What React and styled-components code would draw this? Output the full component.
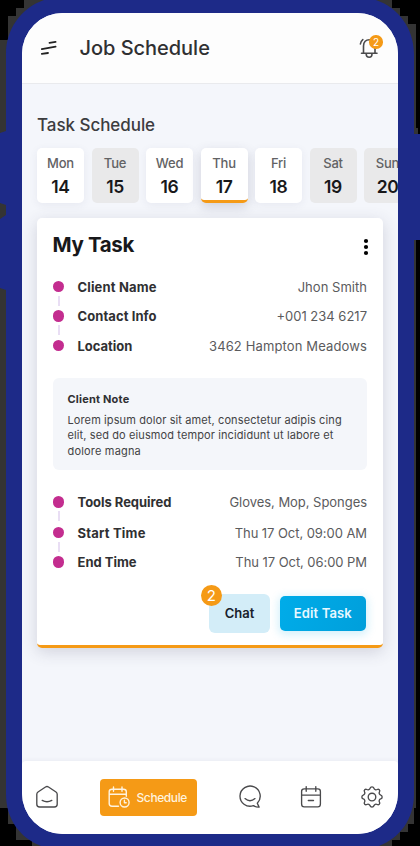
import React from "react";
import styled, { createGlobalStyle, css } from "styled-components";

const colors = {
  frame: "#1d2a88",
  ink: "#303032",
  muted: "#5b5b5d",
  orange: "#f59a16",
  pink: "#c32d8f",
  surface: "#f4f6fb",
};

const GlobalStyle = createGlobalStyle`
  *, *::before, *::after { box-sizing: border-box; }
  body { margin: 0; background: #000; font-family: Inter, "Liberation Sans", sans-serif; }
  button { font: inherit; border: 0; padding: 0; background: none; color: inherit; }
  h1, h2, h3, p { margin: 0; }
`;

const tracked = css`
  letter-spacing: ${(p) => p.$track || 0}px;
  white-space: nowrap;
`;

const Stage = styled.div`
  display: grid;
  width: 420px;
  height: 846px;
  overflow: hidden;
  background: #000;
  & > * { grid-area: 1 / 1; }
`;

const Casing = styled.svg`
  display: block;
`;

const Screen = styled.main`
  display: flex;
  flex-direction: column;
  width: 376px;
  height: 821px;
  margin: 12.5px 0 0 22px;
  border-radius: 41px;
  overflow: hidden;
  background: ${colors.surface};
`;

const Header = styled.header`
  display: flex;
  align-items: center;
  flex: none;
  height: 71.5px;
  padding: 0 17px 0 18px;
  background: #fdfdfd;
  border-bottom: 1.5px solid #e9eaed;
`;

const PageTitle = styled.h1`
  flex: 1;
  margin-left: 21.5px;
  font-size: 20px;
  line-height: 26px;
  font-weight: 450;
  color: ${colors.ink};
  ${tracked}
`;

const BellButton = styled.button`
  position: relative;
  display: flex;
  width: 24px;
  height: 26px;
`;

const CountBadge = styled.span`
  position: absolute;
  top: ${(p) => p.$top}px;
  left: ${(p) => p.$left}px;
  display: flex;
  align-items: center;
  justify-content: center;
  width: ${(p) => p.$size}px;
  height: ${(p) => p.$size}px;
  border-radius: 50%;
  background: ${colors.orange};
  color: #fff;
  font-size: ${(p) => p.$font}px;
  line-height: 1;
  font-weight: 400;
`;

const Content = styled.div`
  flex: 1;
  min-height: 0;
  padding: 30px 15px 0;
`;

const SectionTitle = styled.h2`
  height: 22px;
  margin-bottom: 12px;
  font-size: 17px;
  line-height: 22px;
  font-weight: 450;
  color: #3c3c3f;
  ${tracked}
`;

const Days = styled.div`
  display: flex;
  gap: 7.5px;
  margin-bottom: 15px;
`;

const Day = styled.button`
  display: flex;
  flex: none;
  flex-direction: column;
  align-items: center;
  width: 47px;
  height: 54.5px;
  padding-top: 6px;
  border-radius: 5px;
  background: ${(p) => (p.$off ? "#e9e9ea" : "#fff")};
  border-bottom: ${(p) => (p.$active ? `3px solid ${colors.orange}` : "0")};
  box-shadow: ${(p) =>
    p.$active
      ? "0 4px 12px rgba(60, 60, 90, 0.2)"
      : p.$off
        ? "none"
        : "0 2px 8px rgba(60, 60, 100, 0.07)"};
`;

const DayName = styled.span`
  font-size: 13px;
  line-height: 18px;
  font-weight: 500;
  letter-spacing: -0.2px;
  color: #626264;
`;

const DayNumber = styled.span`
  margin-top: 3px;
  font-size: 17.5px;
  line-height: 23px;
  font-weight: 600;
  letter-spacing: -0.4px;
  color: #18181a;
`;

const Card = styled.section`
  height: 430px;
  padding: 13px 16px 0 15.5px;
  border-radius: 5px;
  border-bottom: 3px solid ${colors.orange};
  background: #fff;
  box-shadow: 0 4px 16px rgba(60, 60, 90, 0.19);
`;

const CardHead = styled.div`
  display: flex;
  align-items: center;
  justify-content: space-between;
  height: 28px;
  margin-bottom: 13.5px;
`;

const CardTitle = styled.h2`
  font-size: 20.5px;
  line-height: 28px;
  font-weight: 700;
  color: #18181a;
  ${tracked}
`;

const MoreButton = styled.button`
  display: flex;
  margin: 4px -1.5px 0 0;
`;

const Facts = styled.div`
  display: flex;
  flex-direction: column;
`;

const Fact = styled.div`
  display: grid;
  grid-template-columns: 25px 1fr auto;
  align-items: center;
  height: ${(p) => p.$height}px;
  font-size: 13px;
`;

const Marker = styled.span`
  position: relative;
  width: 11.5px;
  height: 11.5px;
  border-radius: 50%;
  background: ${colors.pink};
  ${(p) =>
    p.$linked &&
    css`
      &::after {
        content: "";
        position: absolute;
        top: 15px;
        left: 5px;
        width: 2px;
        height: 10px;
        background: #e9def4;
      }
    `}
`;

const FactLabel = styled.span`
  font-weight: 650;
  color: ${colors.ink};
  ${tracked}
`;

const FactValue = styled.span`
  font-weight: 400;
  color: ${colors.muted};
  ${tracked}
`;

const Note = styled.div`
  height: 92px;
  margin: 17.5px 0 16.5px;
  padding: 13px 15px 0;
  border-radius: 6px;
  background: #f4f6fa;
`;

const NoteTitle = styled.h3`
  margin-bottom: 5.5px;
  font-size: 11px;
  line-height: 16px;
  font-weight: 650;
  color: ${colors.ink};
  ${tracked}
`;

const NoteLine = styled.p`
  font-size: 11px;
  line-height: 15.5px;
  color: #434345;
  ${tracked}
`;

const Actions = styled.div`
  display: flex;
  align-items: center;
  justify-content: flex-end;
  gap: 10px;
  margin-top: 17px;
`;

const Action = styled.button`
  position: relative;
  font-size: 13px;
  font-weight: 600;
  ${tracked}
`;

const ChatAction = styled(Action)`
  width: 61px;
  height: 39px;
  border-radius: 6px;
  background: #d3edf8;
  color: #18212b;
`;

const EditAction = styled(Action)`
  width: 85.5px;
  height: 35px;
  margin-right: 1.5px;
  border-radius: 5px;
  background: linear-gradient(110deg, #00ace9, #009fdb);
  color: #e8f8ff;
  box-shadow: 0 2px 8px 2px rgba(0, 172, 230, 0.17);
`;

const Nav = styled.nav`
  display: flex;
  align-items: center;
  flex: none;
  height: 72.5px;
  padding: 0 14px 0 13px;
  border-radius: 4px 4px 0 0;
  background: #fff;
  box-shadow: 0 -1px 4px rgba(60, 60, 90, 0.05);
`;

const NavItem = styled.button`
  display: flex;
  flex: none;
  margin-left: ${(p) => p.$gap}px;
`;

const ActiveNavItem = styled(NavItem)`
  align-items: center;
  width: 97px;
  height: 37px;
  padding-left: 8px;
  gap: 7px;
  border-radius: 4px;
  background: ${colors.orange};
  color: #fff3df;
  font-size: 12px;
  font-weight: 500;
  letter-spacing: -0.4px;
`;

const Icon = styled.svg`
  display: block;
  flex: none;
  fill: none;
  stroke: ${(p) => p.$stroke || "#4a4a4c"};
  stroke-width: ${(p) => p.$weight || 1.35};
  stroke-linecap: round;
  stroke-linejoin: round;
`;

function PhoneCasing() {
  return (
    <Casing width="420" height="846" viewBox="0 0 420 846" aria-hidden="true">
      <path
        fill="#343434"
        d="M24 0H392V8H400V16H408V24H416V128H418V134H420V236H416V808H414V824H408V832H400V840H392V846H32V840H16V824H8V808H0V40H8V16H16V8H24Z"
      />
      <path
        fill={colors.frame}
        d="M44 0H376C399 8 414 29 414 54V134H420V240H414V794C414 819 400 838 379 846H41C20 838 6 819 6 794V290L0 288V219L6 215V205L0 203V133L6 131V54C6 29 21 8 44 0Z"
      />
    </Casing>
  );
}

const MenuIcon = () => (
  <Icon width="18" height="16" viewBox="0 0 18 16" $stroke="#222" $weight="1.8">
    <path d="M9.5 2.8 15.6 1.9M1.8 9.1 15.6 6.6M1.8 13.9 8 13" />
  </Icon>
);

const BellIcon = () => (
  <Icon width="24" height="26" viewBox="0 0 24 26" $weight="1.6">
    <path d="M4.5 18.2H20M6.5 17.9V10.9C6.5 6.9 9 4.7 12.3 4.7S18 7.2 18 10.9V17.9M9.2 18.9C9.2 20.9 10.5 22.2 12.2 22.2S15 20.9 15 18.9M3.4 9C3.6 7.2 4.4 5.7 5.8 4.6" />
  </Icon>
);

const MoreIcon = () => (
  <Icon width="6" height="18" viewBox="0 0 6 18" $stroke="none">
    <g fill="#000">
      <circle cx="3" cy="3" r="2.1" />
      <circle cx="3" cy="9" r="2.1" />
      <circle cx="3" cy="15" r="2.1" />
    </g>
  </Icon>
);

const HomeIcon = () => (
  <Icon width="24" height="24" viewBox="0 0 24 24">
    <path d="M1.8 9.2Q1.8 7.8 3 7L10.5 2Q12 1.1 13.5 2L21 7Q22.2 7.8 22.2 9.2V19.2Q22.2 22 19.4 22H4.6Q1.8 22 1.8 19.2ZM7.2 15.4Q12 18 16.8 15.4" />
  </Icon>
);

const ScheduleIcon = () => (
  <Icon width="22" height="22" viewBox="0 0 22 22" $stroke="#fff3df" $weight="1.4">
    <path d="M10.5 20.3H4Q1.2 20.3 1.2 17.5V5.8Q1.2 3.2 4 3.2H15.5Q18.3 3.2 18.3 5.8V10.2M1.2 8.3H18.3M5.5 1V5.3M14 1V5.3" />
    <circle cx="16.6" cy="16.5" r="4.5" />
    <path d="M16.4 14.3V16.8H18.2" />
  </Icon>
);

const ChatIcon = () => (
  <Icon width="24" height="24" viewBox="0 0 24 24">
    <path d="M15.3 20.7A10.1 10.1 0 1 1 19.3 18.2L21.1 22.1Q18.6 22.5 15.3 20.7ZM7 13.6Q12 17.9 17 13.6" />
  </Icon>
);

const CalendarIcon = () => (
  <Icon width="22" height="24" viewBox="0 0 22 24">
    <path d="M1.6 6.5Q1.6 3.9 4.2 3.9H17.8Q20.4 3.9 20.4 6.5V19Q20.4 21.9 17.8 21.9H4.2Q1.6 21.9 1.6 19ZM1.6 10.1H20.4M6.2 1.6V6.3M15.8 1.6V6.3M8.3 15.5H13.5" />
  </Icon>
);

const GearIcon = () => (
  <Icon width="24" height="24" viewBox="0 0 24 24">
    <circle cx="12" cy="12" r="3.8" />
    <path d="M10.1 3.2C10.6 1.5 13.4 1.5 13.9 3.2C14.3 4.7 15.9 5.3 17.2 4.5C18.8 3.7 20.4 5.3 19.5 6.8C18.7 8.1 19.3 9.7 20.8 10.1C22.6 10.6 22.6 13.4 20.8 13.9C19.3 14.3 18.7 15.9 19.5 17.2C20.4 18.7 18.8 20.3 17.2 19.5C15.9 18.7 14.3 19.3 13.9 20.8C13.4 22.5 10.6 22.5 10.1 20.8C9.7 19.3 8.1 18.7 6.8 19.5C5.2 20.3 3.6 18.7 4.5 17.2C5.3 15.9 4.7 14.3 3.2 13.9C1.4 13.4 1.4 10.6 3.2 10.1C4.7 9.7 5.3 8.1 4.5 6.8C3.6 5.3 5.2 3.7 6.8 4.5C8.1 5.3 9.7 4.7 10.1 3.2Z" />
  </Icon>
);

const days = [
  { name: "Mon", date: 14 },
  { name: "Tue", date: 15, off: true },
  { name: "Wed", date: 16 },
  { name: "Thu", date: 17, active: true },
  { name: "Fri", date: 18 },
  { name: "Sat", date: 19, off: true },
  { name: "Sun", date: 20, off: true },
];

const clientFacts = [
  { label: "Client Name", labelTrack: 0.15, value: "Jhon Smith", track: 0.03, height: 29 },
  { label: "Contact Info", labelTrack: 0.08, value: "+001 234 6217", track: 0, height: 29.5 },
  { label: "Location", labelTrack: -0.02, value: "3462 Hampton Meadows", track: 0.13, height: 30 },
];

const jobFacts = [
  { label: "Tools Required", labelTrack: -0.03, value: "Gloves, Mop, Sponges", track: -0.04, height: 31 },
  { label: "Start Time", labelTrack: 0.2, value: "Thu 17 Oct, 09:00 AM", track: -0.06, height: 30 },
  { label: "End Time", labelTrack: 0, value: "Thu 17 Oct, 06:00 PM", track: -0.06, height: 29 },
];

const noteLines = [
  { text: "Lorem ipsum dolor sit amet, consectetur adipis cing", track: 0.11 },
  { text: "elit, sed do eiusmod tempor incididunt ut labore et", track: 0.11 },
  { text: "dolore magna", track: 0.18 },
];

function FactList({ items }) {
  return (
    <Facts>
      {items.map((item, i) => (
        <Fact key={item.label} $height={item.height}>
          <Marker $linked={i < items.length - 1} />
          <FactLabel $track={item.labelTrack}>{item.label}</FactLabel>
          <FactValue $track={item.track}>{item.value}</FactValue>
        </Fact>
      ))}
    </Facts>
  );
}

export default function App() {
  return (
    <>
      <GlobalStyle />
      <Stage>
        <PhoneCasing />
        <Screen>
          <Header>
            <MenuIcon />
            <PageTitle $track={-0.03}>Job Schedule</PageTitle>
            <BellButton aria-label="Notifications">
              <BellIcon />
              <CountBadge $top={0.5} $left={12.2} $size={13.5} $font={10}>2</CountBadge>
            </BellButton>
          </Header>
          <Content>
            <SectionTitle $track={-0.05}>Task Schedule</SectionTitle>
            <Days>
              {days.map((day) => (
                <Day key={day.name} $off={day.off} $active={day.active}>
                  <DayName>{day.name}</DayName>
                  <DayNumber>{day.date}</DayNumber>
                </Day>
              ))}
            </Days>
            <Card>
              <CardHead>
                <CardTitle $track={-0.35}>My Task</CardTitle>
                <MoreButton aria-label="More"><MoreIcon /></MoreButton>
              </CardHead>
              <FactList items={clientFacts} />
              <Note>
                <NoteTitle $track={0.2}>Client Note</NoteTitle>
                {noteLines.map((line) => (
                  <NoteLine key={line.text} $track={line.track}>{line.text}</NoteLine>
                ))}
              </Note>
              <FactList items={jobFacts} />
              <Actions>
                <ChatAction>
                  Chat
                  <CountBadge $top={-9} $left={-8.5} $size={21.5} $font={15}>2</CountBadge>
                </ChatAction>
                <EditAction $track={0.15}>Edit Task</EditAction>
              </Actions>
            </Card>
          </Content>
          <Nav>
            <NavItem aria-label="Home"><HomeIcon /></NavItem>
            <ActiveNavItem $gap={40.5}>
              <ScheduleIcon />
              Schedule
            </ActiveNavItem>
            <NavItem $gap={41} aria-label="Messages"><ChatIcon /></NavItem>
            <NavItem $gap={38.5} aria-label="Calendar"><CalendarIcon /></NavItem>
            <NavItem $gap={38} aria-label="Settings"><GearIcon /></NavItem>
          </Nav>
        </Screen>
      </Stage>
    </>
  );
}
